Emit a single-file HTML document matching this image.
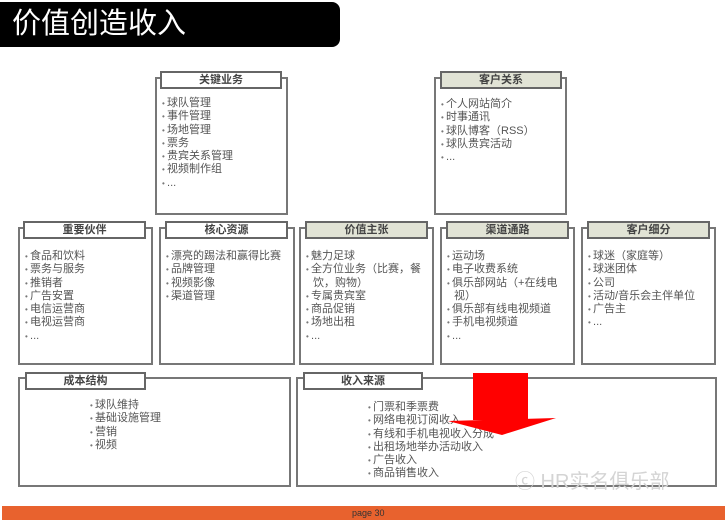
<!DOCTYPE html>
<html><head><meta charset="utf-8"><style>
body{margin:0;width:725px;height:520px;background:#fff;position:relative;overflow:hidden;font-family:"Liberation Sans","Noto Sans CJK SC",sans-serif;}
.t{position:absolute;left:0;top:2px;width:340px;height:45px;background:#000;border-radius:0 8px 8px 0;color:#fff;font-size:29px;line-height:45px;padding-left:12px;box-sizing:border-box;}
.b{position:absolute;border:2px solid #777;box-sizing:border-box;background:#fff;}
.h{position:absolute;border:2px solid #666;box-sizing:border-box;background:#fff;font-size:11px;color:#444;text-align:center;line-height:14px;font-weight:bold;}
.g{background:#e1e3d5;}
.l{position:absolute;font-size:11px;color:#555;line-height:13.3px;word-break:break-all;}
.l div{padding-left:7px;text-indent:-7px;}
.l div:before{content:"•\00a0";font-size:8px;color:#777;}
</style></head><body>
<div class="t">价值创造收入</div>

<div class="b" style="left:155px;top:77px;width:133px;height:138px"></div>
<div class="h" style="left:160px;top:71px;width:122px;height:18px">关键业务</div>
<div class="l" style="left:162px;top:97px;width:120px"><div>球队管理</div><div>事件管理</div><div>场地管理</div><div>票务</div><div>贵宾关系管理</div><div>视频制作组</div><div>...</div></div>

<div class="b" style="left:434px;top:77px;width:133px;height:138px"></div>
<div class="h g" style="left:440px;top:71px;width:122px;height:18px">客户关系</div>
<div class="l" style="left:441px;top:98px;width:120px"><div>个人网站简介</div><div>时事通讯</div><div>球队博客（RSS）</div><div>球队贵宾活动</div><div>...</div></div>

<div class="b" style="left:18px;top:227px;width:135px;height:138px"></div>
<div class="h" style="left:23px;top:221px;width:123px;height:18px">重要伙伴</div>
<div class="l" style="left:25px;top:250px;width:122px"><div>食品和饮料</div><div>票务与服务</div><div>推销者</div><div>广告安置</div><div>电信运营商</div><div>电视运营商</div><div>...</div></div>

<div class="b" style="left:159px;top:227px;width:136px;height:138px"></div>
<div class="h" style="left:165px;top:221px;width:123px;height:18px">核心资源</div>
<div class="l" style="left:166px;top:250px;width:128px"><div>漂亮的踢法和赢得比赛</div><div>品牌管理</div><div>视频影像</div><div>渠道管理</div></div>

<div class="b" style="left:299px;top:227px;width:135px;height:138px"></div>
<div class="h g" style="left:305px;top:221px;width:123px;height:18px">价值主张</div>
<div class="l" style="left:306px;top:250px;width:124px"><div>魅力足球</div><div>全方位业务（比赛，餐饮，购物）</div><div>专属贵宾室</div><div>商品促销</div><div>场地出租</div><div>...</div></div>

<div class="b" style="left:440px;top:227px;width:135px;height:138px"></div>
<div class="h g" style="left:446px;top:221px;width:123px;height:18px">渠道通路</div>
<div class="l" style="left:447px;top:250px;width:124px"><div>运动场</div><div>电子收费系统</div><div>俱乐部网站（+在线电视）</div><div>俱乐部有线电视频道</div><div>手机电视频道</div><div>...</div></div>

<div class="b" style="left:581px;top:227px;width:135px;height:138px"></div>
<div class="h g" style="left:587px;top:221px;width:123px;height:18px">客户细分</div>
<div class="l" style="left:588px;top:250px;width:127px"><div>球迷（家庭等）</div><div>球迷团体</div><div>公司</div><div>活动/音乐会主伴单位</div><div>广告主</div><div>...</div></div>

<div class="b" style="left:18px;top:377px;width:273px;height:110px"></div>
<div class="h" style="left:25px;top:372px;width:121px;height:18px">成本结构</div>
<div class="l" style="left:90px;top:399px;width:150px"><div>球队维持</div><div>基础设施管理</div><div>营销</div><div>视频</div></div>

<div class="b" style="left:296px;top:377px;width:421px;height:110px"></div>
<div class="h" style="left:303px;top:372px;width:120px;height:18px">收入来源</div>
<div class="l" style="left:368px;top:401px;width:200px"><div>门票和季票费</div><div>网络电视订阅收入</div><div>有线和手机电视收入分成</div><div>出租场地举办活动收入</div><div>广告收入</div><div>商品销售收入</div></div>

<svg style="position:absolute;left:0;top:0" width="725" height="520">
<rect x="473" y="373" width="55" height="47" fill="#f00"/>
<polygon points="448,421 556,418 502,435" fill="#f00"/>
</svg>
<div style="position:absolute;left:515px;top:470px;font-size:20px;color:#d4d4d4;line-height:24px">ⓒ HR实名俱乐部</div>

<div style="position:absolute;left:2px;top:506px;width:723px;height:14px;background:#e8622e;font-size:9px;color:#333;line-height:14px;padding-left:350px;box-sizing:border-box">page 30</div>
</body></html>
